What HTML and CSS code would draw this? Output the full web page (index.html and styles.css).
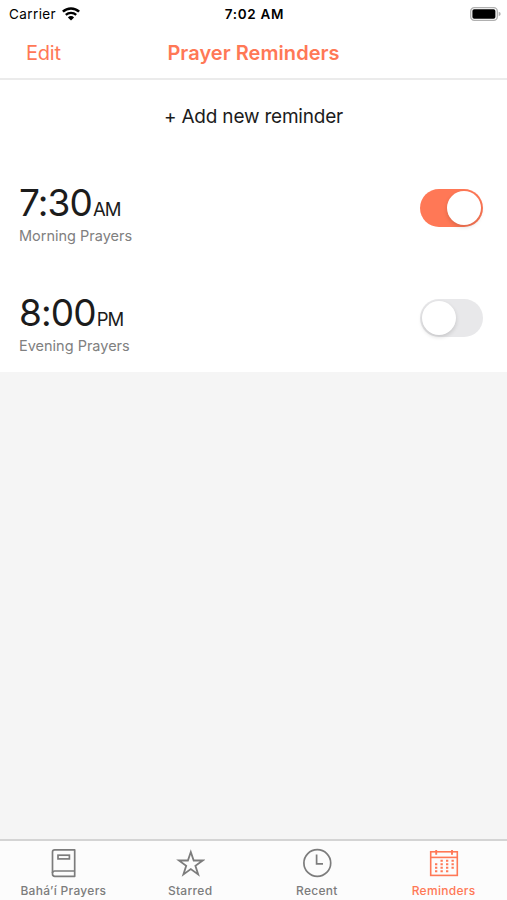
FILE: index.html
```html
<!DOCTYPE html>
<html lang="en">
<head>
  <meta charset="UTF-8">
  <meta name="viewport" content="width=device-width, initial-scale=1.0">
  <title>Prayer Reminders</title>
  <link rel="stylesheet" href="styles.css">
</head>
<body>
  <div class="status-bar">
    <div class="carrier">
      <span class="carrier-name">Carrier</span>
      <svg class="wifi" width="18" height="14" viewBox="0 0 18 14">
        <path d="M0.9 4.7a11.6 11.6 0 0 1 16.2 0" fill="none" stroke="#000" stroke-width="2.5"/>
        <path d="M3.8 7.9a7.5 7.5 0 0 1 10.4 0" fill="none" stroke="#000" stroke-width="2.2"/>
        <path d="M9 13.6L5.9 10.4a4.4 4.4 0 0 1 6.2 0z"/>
      </svg>
    </div>
    <span class="clock">7:02 AM</span>
    <svg class="battery" width="31" height="14" viewBox="0 0 31 14">
      <rect x="0.7" y="0.7" width="26.6" height="12.6" rx="3.6" fill="#fff" stroke="#b0b0b0" stroke-width="1.3"/>
      <rect x="2.4" y="2.3" width="23" height="9.4" rx="1.8"/>
      <path d="M28.7 4.8q2 .6 2 2.2t-2 2.2z" fill="#b0b0b0"/>
    </svg>
  </div>

  <header class="nav-bar">
    <a class="edit" href="#">Edit</a>
    <h1 class="title">Prayer Reminders</h1>
  </header>

  <main class="reminders">
    <a class="add" href="#">+ Add new reminder</a>
    <div class="reminder">
      <div class="info">
        <div class="time">7:30<span class="period">AM</span></div>
        <div class="label">Morning Prayers</div>
      </div>
      <div class="switch on"><div class="knob"></div></div>
    </div>
    <div class="reminder">
      <div class="info">
        <div class="time">8:00<span class="period">PM</span></div>
        <div class="label">Evening Prayers</div>
      </div>
      <div class="switch"><div class="knob"></div></div>
    </div>
  </main>

  <nav class="tab-bar">
    <a class="tab" href="#">
      <svg class="icon" width="30" height="30" viewBox="0 0 30 30" fill="none" stroke="currentColor" stroke-width="1.7">
        <path d="M26.7 1.8H6.7q-2.2 0-2.2 2.2V26q0 2.3 2.3 2.3H26.7z" stroke-linejoin="round"/>
        <path d="M4.5 25q0-2 2.3-2H26.7"/>
        <rect x="10" y="7.2" width="11.4" height="3.7"/>
      </svg>
      <span class="tab-name">Bahá’í Prayers</span>
    </a>
    <a class="tab" href="#">
      <svg class="icon" width="30" height="30" viewBox="0 0 30 30" fill="none" stroke="currentColor" stroke-width="1.8">
        <path d="M15.8 4l2.9 8.5h9l-7.3 5.3 2.8 8.6-7.4-5.3-7.4 5.3 2.8-8.6-7.3-5.3h9z"/>
      </svg>
      <span class="tab-name">Starred</span>
    </a>
    <a class="tab" href="#">
      <svg class="icon" width="30" height="30" viewBox="0 0 30 30" fill="none" stroke="currentColor" stroke-width="1.7">
        <circle cx="15.3" cy="15" r="13.4"/>
        <path d="M14.6 6.6v9.3h6.4"/>
      </svg>
      <span class="tab-name">Recent</span>
    </a>
    <a class="tab active" href="#">
      <svg class="icon" width="30" height="30" viewBox="0 0 30 30" fill="none" stroke="currentColor" stroke-width="1.6">
        <rect x="1.7" y="3.8" width="26.6" height="23.6"/>
        <path d="M1.7 9.4h26.6"/>
        <path d="M7.2 2v4.8M23 2v4.8" stroke-width="1.9"/>
        <path d="M11.5 12.8h14M11.5 16.3h14M6 16.3h3M6 19.8h19.5M6 23.3h14" stroke-width="1.9" stroke-dasharray="2.3 3.2"/>
      </svg>
      <span class="tab-name">Reminders</span>
    </a>
  </nav>
</body>
</html>
```
FILE: styles.css
```css
* {
  box-sizing: border-box;
}

body {
  margin: 0;
  height: 100vh;
  display: flex;
  flex-direction: column;
  background-color: #f5f5f5;
  color: #1c1c1c;
  font-family: Inter, "Liberation Sans", sans-serif;
  overflow: hidden;
}

a {
  color: inherit;
  text-decoration: none;
}

/* Status bar */
.status-bar {
  display: grid;
  grid-template-columns: 1fr auto 1fr;
  align-items: center;
  height: 27px;
  padding: 0 7px 0 9px;
  background-color: #fff;
  color: #000;
  font-size: 13px;
}

.carrier {
  display: flex;
  align-items: center;
  gap: 6px;
}

.carrier-name {
  font-size: 13.5px;
  letter-spacing: 0.4px;
}

.clock {
  font-size: 13.5px;
  font-weight: 600;
  letter-spacing: 0.7px;
}

.battery {
  justify-self: end;
  margin-right: -1px;
}

/* Navigation bar */
.nav-bar {
  display: grid;
  grid-template-columns: 1fr auto 1fr;
  align-items: center;
  height: 53px;
  padding: 1px 26px 0;
  background-color: #fff;
  border-bottom: 2px solid #ebebeb;
  color: #ff7856;
  font-size: 20px;
}

.edit {
  letter-spacing: -0.2px;
}

.title {
  margin: 0;
  font-size: 20px;
  font-weight: 600;
  letter-spacing: 0.05px;
}

/* Reminder list */
.reminders {
  background-color: #fff;
}

.add {
  display: block;
  height: 72px;
  padding-top: 1px;
  line-height: 72px;
  text-align: center;
  font-size: 19px;
  letter-spacing: -0.2px;
}

.reminder {
  display: flex;
  justify-content: space-between;
  height: 110px;
  padding: 30px 24px 0 19px;
}

.time {
  height: 42px;
  line-height: 42px;
  font-size: 37px;
  font-weight: 400;
  letter-spacing: -0.9px;
}

.period {
  margin-left: 1px;
  font-size: 18.5px;
  letter-spacing: -0.9px;
}

.label {
  line-height: 24px;
  color: #808080;
  font-size: 14.5px;
}

.switch {
  width: 63px;
  height: 38px;
  margin-top: 6.5px;
  padding: 2px;
  border-radius: 19px;
  background-color: #e8e8ea;
}

.knob {
  width: 34px;
  height: 34px;
  border-radius: 50%;
  background-color: #fff;
  box-shadow: 0 2px 4px rgba(0, 0, 0, 0.15);
}

.switch.on {
  background-color: #ff7856;
}

.switch.on .knob {
  margin-left: auto;
}

/* Tab bar */
.tab-bar {
  display: grid;
  grid-template-columns: repeat(4, 1fr);
  height: 61px;
  margin-top: auto;
  border-top: 2px solid #d4d4d4;
  background-color: #fcfcfc;
  color: #7c7c7c;
}

.tab {
  display: flex;
  flex-direction: column;
  align-items: center;
  padding-top: 7px;
}

.tab-name {
  margin-top: 5px;
  line-height: 16px;
  font-size: 12px;
  font-weight: 500;
  letter-spacing: 0.3px;
  white-space: nowrap;
}

.tab.active {
  color: #ff7856;
}
```
